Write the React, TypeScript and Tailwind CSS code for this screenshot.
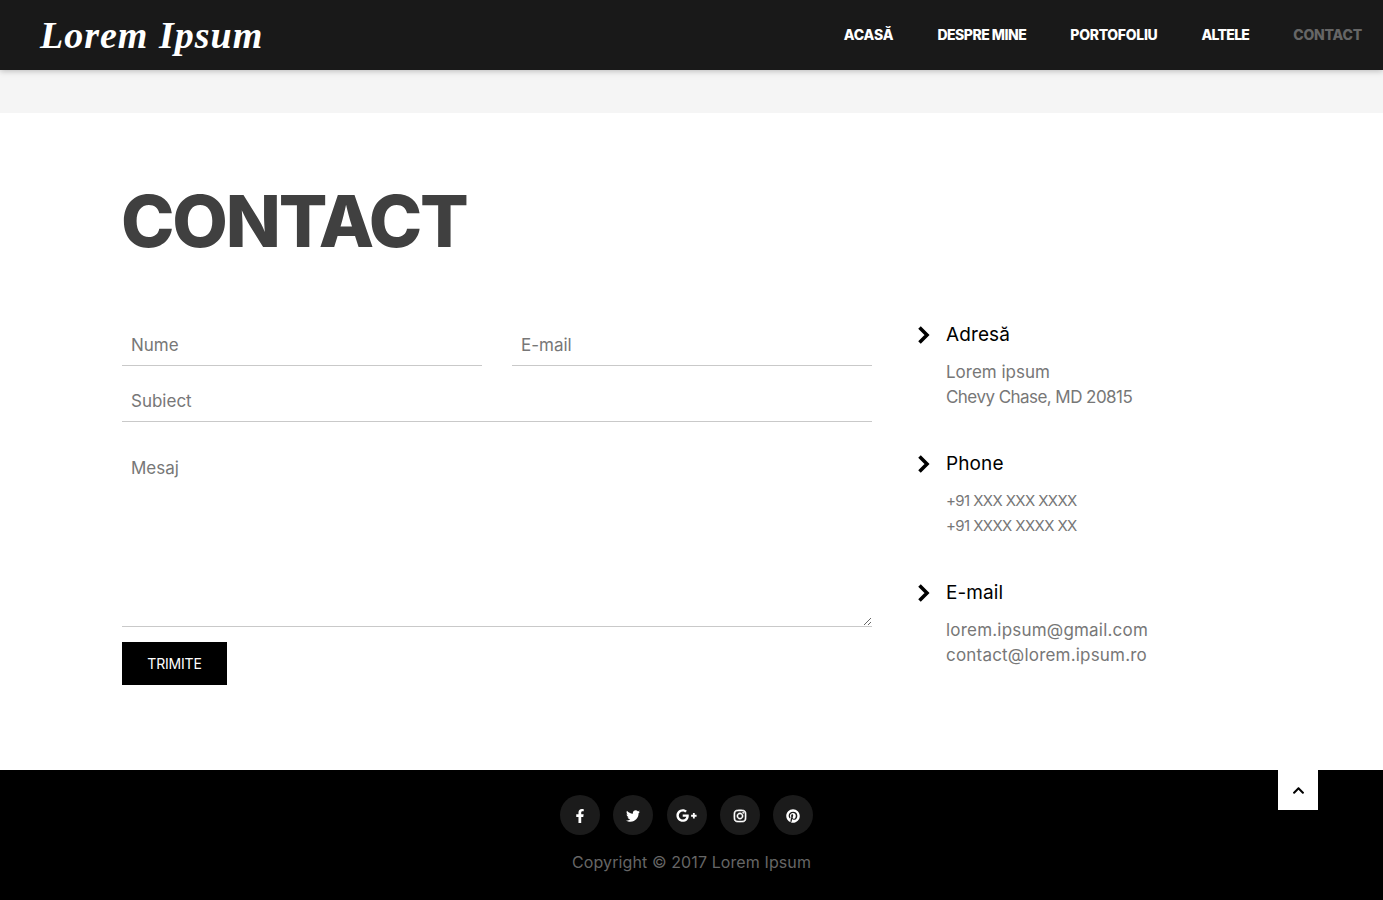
import { FaChevronUp, FaFacebookF, FaGooglePlusG, FaInstagram, FaPinterest, FaTwitter } from "react-icons/fa";

const navLinks = [
  { label: "ACASĂ", className: "tracking-[-0.1px]" },
  { label: "DESPRE MINE", className: "tracking-[-0.5px]" },
  { label: "PORTOFOLIU", className: "tracking-[-0.3px]" },
  { label: "ALTELE", className: "tracking-[-0.7px]" },
];

const contactBlocks = [
  {
    title: "Adresă",
    lines: [
      { text: "Lorem ipsum", className: "translate-y-px text-[17px]" },
      { text: "Chevy Chase, MD 20815", className: "translate-y-px text-[17px] tracking-[-0.55px]" },
    ],
  },
  {
    title: "Phone",
    lines: [
      { text: "+91 XXX XXX XXXX", className: "text-[15px] tracking-[-0.6px]" },
      { text: "+91 XXXX XXXX XX", className: "text-[15px] tracking-[-0.6px]" },
    ],
  },
  {
    title: "E-mail",
    lines: [
      { text: "lorem.ipsum@gmail.com", className: "translate-y-px text-[17px] tracking-[0.2px]" },
      { text: "contact@lorem.ipsum.ro", className: "translate-y-px text-[17px] tracking-[0.2px]" },
    ],
  },
];

const socials = [
  { name: "facebook", icon: <FaFacebookF className="size-[14px]" /> },
  { name: "twitter", icon: <FaTwitter className="size-[14px]" /> },
  { name: "google", icon: <FaGooglePlusG className="size-[21px]" /> },
  { name: "instagram", icon: <FaInstagram className="size-[14px] stroke-[20px]" /> },
  { name: "pinterest", icon: <FaPinterest className="size-[14px]" /> },
];

const field =
  "w-full h-[44px] border-b border-[#c9c9c9] bg-white px-[9px] pt-[2px] text-[17px] text-[#777] placeholder:text-[#777] outline-none";

function Chevron() {
  return (
    <svg viewBox="0 0 14 18" className="h-[18px] w-[14px] shrink-0 text-black" fill="none" stroke="currentColor" strokeWidth="3.6">
      <polyline points="2.5,1.5 10,9 2.5,16.5" />
    </svg>
  );
}

export default function App() {
  return (
    <div className="font-['Inter',sans-serif] bg-white">
      <header className="relative z-10 flex h-[70px] items-center justify-between bg-[#191919] pl-[40px] pr-[21px] shadow-[0_1px_6px_rgba(0,0,0,0.25)]">
        <a className="font-['Liberation_Serif',serif] text-[38px] font-bold italic leading-none tracking-[1px] text-white">
          Lorem Ipsum
        </a>
        <nav className="flex items-center gap-[44px] pb-[2px] text-[14px] font-extrabold text-white">
          {navLinks.map((link) => (
            <a key={link.label} className={link.className}>
              {link.label}
            </a>
          ))}
          <a className="tracking-[-0.2px] text-[#666]">CONTACT</a>
        </nav>
      </header>

      <div className="h-[43px] bg-[#f5f5f5]" />

      <main className="h-[657px] pl-[122px] pt-[72px]">
        <h1 className="-ml-[1px] text-[72px] font-extrabold leading-[72px] tracking-[-2.2px] text-[#404040]">CONTACT</h1>

        <div className="mt-[64px] flex">
          <form className="w-[750px] pt-[1px]">
            <div className="flex gap-[30px]">
              <input className={field} placeholder="Nume" />
              <input className={field} placeholder="E-mail" />
            </div>
            <input className={`${field} mt-[12px]`} placeholder="Subiect" />
            <textarea
              className="mt-[12px] block h-[193px] w-full border-b border-[#c9c9c9] px-[9px] pt-[22px] text-[17px] text-[#777] placeholder:text-[#777] outline-none"
              placeholder="Mesaj"
            />
            <button type="button" className="mt-[15px] h-[43px] w-[105px] bg-black text-[14px] tracking-[-0.2px] text-white">
              TRIMITE
            </button>
          </form>

          <aside className="ml-[45px] flex flex-col gap-[41px]">
            {contactBlocks.map((block) => (
              <div key={block.title}>
                <div className="flex items-center gap-[15px]">
                  <Chevron />
                  <h3 className="text-[19px] font-normal leading-[27px] tracking-[0.1px] text-black">{block.title}</h3>
                </div>
                <div className="mt-[11px] pl-[29px] leading-[25px] text-[#777]">
                  {block.lines.map((line) => (
                    <p key={line.text} className={line.className}>
                      {line.text}
                    </p>
                  ))}
                </div>
              </div>
            ))}
          </aside>
        </div>
      </main>

      <footer className="relative flex h-[130px] flex-col items-center bg-black pt-[25px]">
        <a className="absolute right-[65px] top-0 flex size-[40px] items-center justify-center bg-white text-black">
          <FaChevronUp className="size-[13px]" />
        </a>
        <div className="flex gap-[13.25px] pr-[10px]">
          {socials.map((social) => (
            <a key={social.name} className="flex size-[40px] items-center justify-center rounded-full bg-[#1b1b1b] pt-[1px] text-white">
              {social.icon}
            </a>
          ))}
        </div>
        <p className="mt-[13px] text-[16px] leading-[28px] tracking-[0.1px] text-[#666]">Copyright © 2017 Lorem Ipsum</p>
      </footer>
    </div>
  );
}
